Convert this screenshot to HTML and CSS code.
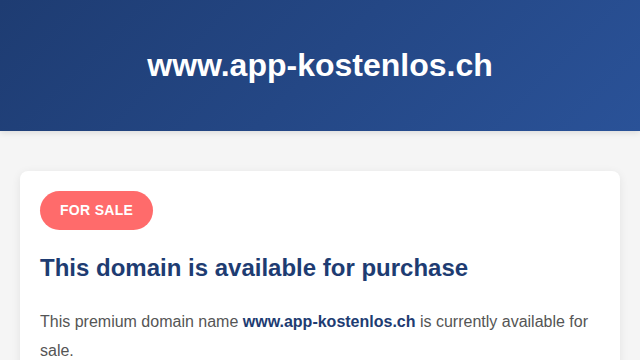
FILE: index.html
```
<!DOCTYPE html>
<html lang="de">
<head>
    <meta charset="UTF-8">
    <meta name="viewport" content="width=device-width, initial-scale=1.0">
    <title>www.app-kostenlos.ch</title>
    <link rel="stylesheet" href="styles.css">
</head>
<body>
    <header class="header">
        <h1>www.app-kostenlos.ch</h1>
    </header>

    <div class="container">
        <div class="card">
            <span class="badge">FOR SALE</span>
            <h2>This domain is available for purchase</h2>
            <p>This premium domain name <strong>www.app-kostenlos.ch</strong> is currently available for sale.</p>
        </div>
    </div>
</body>
</html>
```

FILE: styles.css
```
body {
    font-family: "Liberation Sans", Arial, sans-serif;
    background-color: #f5f5f5;
    color: #555;
    margin: 0;
    padding: 0;
}

.header {
    background: linear-gradient(135deg, #1e3c72, #2a5298);
    color: white;
    text-align: center;
    padding: 46px 20px;
    box-shadow: 0 2px 6px rgba(0,0,0,0.1);
}

.header h1 {
    margin: 0;
    font-size: 32px;
    line-height: 39px;
}

.container {
    max-width: 600px;
    margin: 40px auto;
    padding: 0 20px;
}

.card {
    background-color: white;
    border-radius: 8px;
    padding: 20px;
    box-shadow: 0 2px 10px rgba(0,0,0,0.08);
}

.badge {
    display: inline-block;
    background-color: #ff6b6b;
    color: white;
    font-size: 14px;
    font-weight: bold;
    line-height: 19px;
    letter-spacing: 0.3px;
    padding: 10px 20px;
    border-radius: 20px;
}

.card h2 {
    color: #1e3c72;
    font-size: 24px;
    margin: 24px 0 26px;
}

.card p {
    font-size: 16px;
    line-height: 1.8;
    margin: 0;
}

.card strong {
    color: #1e3c72;
}
```
